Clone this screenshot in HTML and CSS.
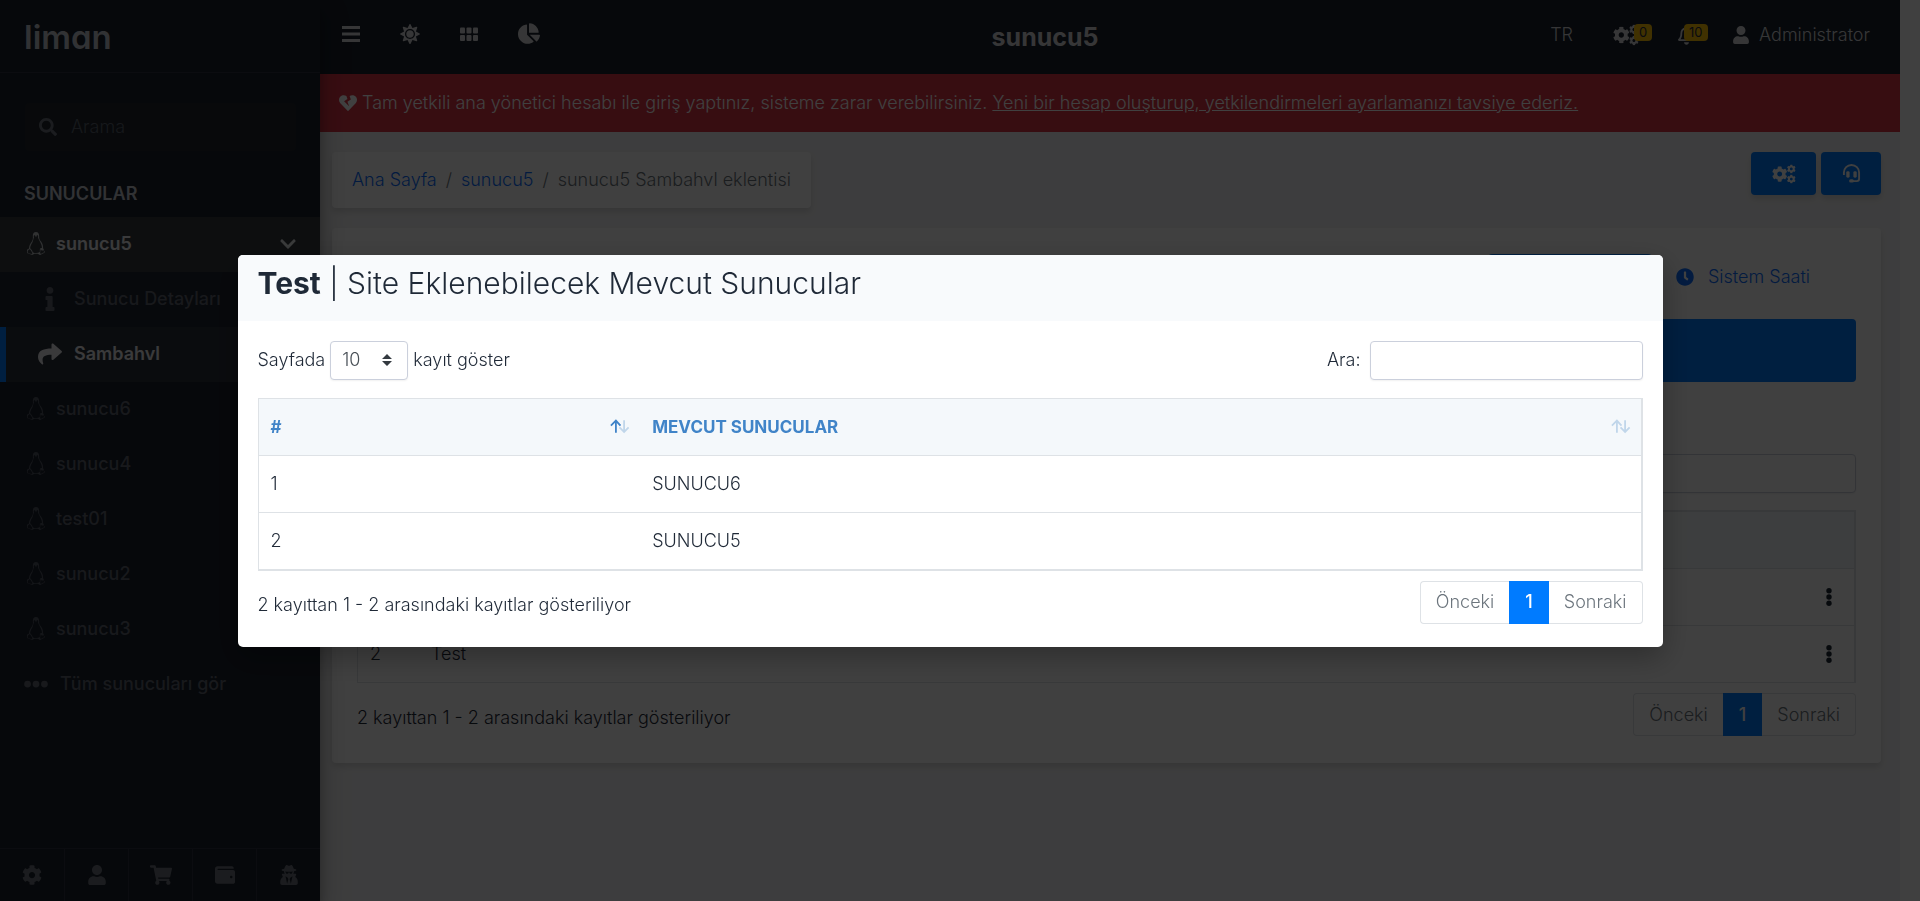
FILE: index.html
```html
<!DOCTYPE html>
<html lang="tr">
<head>
<meta charset="utf-8">
<meta name="viewport" content="width=device-width, initial-scale=1">
<title>sunucu5 - Liman</title>
<link rel="stylesheet" href="styles.css">
</head>
<body>
<svg class="sprite" aria-hidden="true">
  <symbol id="cog" viewBox="0 0 512 512"><path d="M487.4 315.7l-42.6-24.6c4.3-23.2 4.3-47 0-70.2l42.6-24.6c4.9-2.8 7.1-8.6 5.5-14-11.1-35.6-30-67.8-54.7-94.6-3.8-4.1-10-5.1-14.8-2.3L380.8 110c-17.9-15.4-38.5-27.3-60.8-35.1V25.8c0-5.6-3.9-10.5-9.4-11.7-36.7-8.2-74.3-7.8-109.2 0-5.5 1.2-9.4 6.1-9.4 11.7V75c-22.2 7.9-42.8 19.8-60.8 35.1L88.7 85.5c-4.9-2.8-11-1.9-14.8 2.3-24.7 26.7-43.6 58.9-54.7 94.6-1.7 5.4.6 11.2 5.5 14L67.3 221c-4.3 23.2-4.3 47 0 70.2l-42.6 24.6c-4.9 2.8-7.1 8.6-5.5 14 11.1 35.6 30 67.8 54.7 94.6 3.8 4.1 10 5.1 14.8 2.3l42.6-24.6c17.9 15.4 38.5 27.3 60.8 35.1v49.2c0 5.6 3.9 10.5 9.4 11.7 36.7 8.2 74.3 7.8 109.2 0 5.5-1.2 9.4-6.1 9.4-11.7v-49.2c22.2-7.9 42.8-19.8 60.8-35.1l42.6 24.6c4.9 2.8 11 1.9 14.8-2.3 24.7-26.7 43.6-58.9 54.7-94.6 1.5-5.5-.7-11.3-5.6-14.1zM256 336c-44.1 0-80-35.9-80-80s35.9-80 80-80 80 35.9 80 80-35.9 80-80 80z"/></symbol>
  <symbol id="cogs" viewBox="0 0 640 512"><use href="#cog" x="-5" y="46" width="420" height="420"/><use href="#cog" x="395" y="0" width="240" height="240"/><use href="#cog" x="395" y="272" width="240" height="240"/></symbol>
  <symbol id="user" viewBox="0 0 448 512"><path d="M224 256c70.7 0 128-57.3 128-128S294.7 0 224 0 96 57.3 96 128s57.3 128 128 128zm89.6 32h-16.7c-22.2 10.2-46.9 16-72.9 16s-50.6-5.8-72.9-16h-16.7C60.2 288 0 348.2 0 422.4V464c0 26.5 21.5 48 48 48h352c26.5 0 48-21.5 48-48v-41.6c0-74.2-60.2-134.4-134.4-134.4z"/></symbol>
  <symbol id="tux" viewBox="0 0 20 24"><path fill-rule="evenodd" d="M10 0C7.600 0 6.600 1.700 6.700 4.200c.1 2.600.2 3.700-.9 5.500C4.500 11.600 2.800 14 2.700 17.100L.9 18.300c-.6 1 .3 1.700 0 2.900-.2 1.200.7 1.400 2.300 1.700 1.700.4 2.900 1.500 4.200.3.7-.6 4.500-.6 5.300 0 1.300 1.400 2.700.6 3.900-.4 1-.8 2.700-1.100 2.700-2 0-.7-1.200-1-1.200-2.600 0-.7-.4-.9-.8-1.300.5-3-1-5.700-2.700-7.700-1.200-1.500-1.300-2.500-1.300-4.800C13.300 1.700 12.400 0 10 0zM8.600 3.400c.7 0 .9.8.9 1.500h1c0-.8.2-1.500.9-1.500.9 0 1 1.300.7 2.200.5 2.100 1.500 3.400 2.300 5 1 2 1.900 3.800 1.700 6-1.400-.1-2.100.5-2.100 2v2.200c-2 1.500-5.300 1.500-7.400.2C6.300 19.500 4.900 17.500 3.900 16.900c.1-2.300 1.200-4.200 2.300-6 .8-1.500.9-3.300 1.700-5.300-.4-.9-.3-2.200.7-2.200zM3.100 18.100c1.200 0 2 2 2.900 3.500.6 1.100-.3 1.500-1.600 1.200l-2.700-.6c.3-1.200-.4-2 .1-3 .3-.5.9-.5 1.300-1.100zm11.700-.1c.8 1.700 2.100 1.700 3 .8 0 .8.500 1.300.9 2-.7.700-2 .8-2.800 1.600-.7.7-1.600.4-1.600-.8z"/></symbol>
  <symbol id="dots" viewBox="0 0 512 512"><circle cx="76" cy="256" r="72"/><circle cx="256" cy="256" r="72"/><circle cx="436" cy="256" r="72"/></symbol>
  <symbol id="vdots" viewBox="0 0 6 20"><circle cx="3" cy="3" r="3"/><circle cx="3" cy="10" r="3"/><circle cx="3" cy="17" r="3"/></symbol>
  <symbol id="sort" viewBox="0 0 22 16"><path class="up" d="M6.500 15V2M1 7l5.500-5.500L11.500 7"/><path class="down" d="M15.500 1v13M10.500 9l5 5 5-5"/></symbol>
</svg>

<div class="app">
  <aside class="sidebar">
    <a class="brand" href="#">liman</a>
    <div class="search">
      <svg class="icon" viewBox="0 0 512 512" aria-hidden="true"><path d="M505 442.7L405.3 343c-4.500-4.500-10.600-7-17-7H372c27.600-35.300 44-79.700 44-128C416 93.100 322.900 0 208 0S0 93.100 0 208s93.100 208 208 208c48.300 0 92.700-16.400 128-44v16.300c0 6.400 2.500 12.500 7 17l99.700 99.700c9.400 9.400 24.600 9.400 33.900 0l28.300-28.300c9.400-9.400 9.400-24.600.1-34zM208 336c-70.700 0-128-57.200-128-128 0-70.700 57.200-128 128-128 70.700 0 128 57.200 128 128 0 70.700-57.200 128-128 128z"/></svg>
      <input type="search" placeholder="Arama" aria-label="Arama">
    </div>
    <h2 class="nav-title">SUNUCULAR</h2>
    <nav class="nav">
      <a class="nav-item open" href="#"><svg class="tux"><use href="#tux"/></svg><span>sunucu5</span><svg class="chevron" viewBox="0 0 448 512"><path d="M207.029 381.476L12.686 187.132c-9.373-9.373-9.373-24.569 0-33.941l22.667-22.667c9.357-9.357 24.522-9.375 33.901-.04L224 284.505l154.745-154.021c9.379-9.335 24.544-9.317 33.901.04l22.667 22.667c9.373 9.373 9.373 24.569 0 33.941L240.971 381.476c-9.373 9.372-24.569 9.372-33.942 0z"/></svg></a>
      <a class="nav-item sub" href="#"><svg class="sub-icon" viewBox="0 0 192 512"><path d="M20 424.229h20V279.771H20c-11.046 0-20-8.954-20-20V212c0-11.046 8.954-20 20-20h112c11.046 0 20 8.954 20 20v212.229h20c11.046 0 20 8.954 20 20V492c0 11.046-8.954 20-20 20H20c-11.046 0-20-8.954-20-20v-47.771c0-11.046 8.954-20 20-20zM96 0C56.235 0 24 32.235 24 72s32.235 72 72 72 72-32.235 72-72S135.764 0 96 0z"/></svg><span>Sunucu Detayları</span></a>
      <a class="nav-item sub current" href="#"><svg class="sub-icon" viewBox="0 0 512 512"><path d="M503.691 189.836L327.687 37.851C312.281 24.546 288 35.347 288 56.015v80.053C127.371 137.907 0 170.100 0 322.326c0 61.441 39.581 122.309 83.333 154.132 13.653 9.931 33.111-2.533 28.077-18.631C66.066 312.814 132.917 274.316 288 272.085V360c0 20.700 24.300 31.453 39.687 18.164l176.004-152c11.071-9.562 11.086-26.753 0-36.328z"/></svg><span>Sambahvl</span></a>
      <a class="nav-item" href="#"><svg class="tux"><use href="#tux"/></svg><span>sunucu6</span></a>
      <a class="nav-item" href="#"><svg class="tux"><use href="#tux"/></svg><span>sunucu4</span></a>
      <a class="nav-item" href="#"><svg class="tux"><use href="#tux"/></svg><span>test01</span></a>
      <a class="nav-item" href="#"><svg class="tux"><use href="#tux"/></svg><span>sunucu2</span></a>
      <a class="nav-item" href="#"><svg class="tux"><use href="#tux"/></svg><span>sunucu3</span></a>
      <a class="nav-item all" href="#"><svg class="dots"><use href="#dots"/></svg><span>Tüm sunucuları gör</span></a>
    </nav>
    <div class="sidebar-footer">
      <a href="#" aria-label="Ayarlar"><svg class="icon"><use href="#cog"/></svg></a>
      <a href="#" aria-label="Profil"><svg class="icon"><use href="#user"/></svg></a>
      <a href="#" aria-label="Market"><svg class="icon wide" viewBox="0 0 576 512"><path d="M528.120 301.319l47.273-208C578.806 78.301 567.391 64 551.990 64H159.208l-9.166-44.810C147.758 8.021 137.930 0 126.529 0H24C10.745 0 0 10.745 0 24v16c0 13.255 10.745 24 24 24h69.883l70.248 343.435C147.325 417.100 136 435.222 136 456c0 30.928 25.072 56 56 56s56-25.072 56-56c0-15.674-6.447-29.835-16.824-40h209.647C430.447 426.165 424 440.326 424 456c0 30.928 25.072 56 56 56s56-25.072 56-56c0-22.172-12.888-41.332-31.579-50.405l5.517-24.276c3.413-15.018-8.002-29.319-23.403-29.319H218.117l-6.545-32h293.145c11.206 0 20.920-7.754 23.403-18.681z"/></svg></a>
      <a href="#" aria-label="Kasa"><svg class="icon" viewBox="0 0 512 512"><path d="M461.200 128H80c-8.840 0-16-7.160-16-16s7.160-16 16-16h384c8.840 0 16-7.160 16-16 0-26.510-21.490-48-48-48H64C28.650 32 0 60.650 0 96v320c0 35.350 28.650 64 64 64h397.200c28.020 0 50.800-21.530 50.800-48V176c0-26.470-22.780-48-50.800-48zM416 336c-17.670 0-32-14.330-32-32s14.330-32 32-32 32 14.330 32 32-14.330 32-32 32z"/></svg></a>
      <a href="#" aria-label="Erişim"><svg class="icon" viewBox="0 0 448 512"><path d="M383.900 308.300l23.900-62.600c4-10.500-3.700-21.700-15-21.700h-58.500c11-18.900 17.800-40.600 17.800-64v-.3c39.200-7.800 64-19.100 64-31.700 0-13.300-27.300-25.100-70.100-33-9.200-32.800-27-65.800-40.600-82.800-9.500-11.900-25.900-15.600-39.500-8.800l-27.600 13.800c-9 4.500-19.600 4.500-28.600 0L182.100 3.400c-13.600-6.800-30-3.100-39.500 8.800-13.500 17-31.400 50-40.600 82.800-42.700 7.900-70 19.700-70 33 0 12.600 24.800 23.900 64 31.700v.3c0 23.400 6.800 45.100 17.800 64H56.300c-11.500 0-19.200 11.700-14.700 22.300l25.800 60.200C27.300 329.800 0 372.700 0 422.400v44.800C0 491.900 20.100 512 44.800 512h358.400c24.700 0 44.800-20.100 44.800-44.800v-44.800c0-48.400-25.800-90.400-64.100-114.100zM176 480l-41.600-192 49.600 32 24 40-32 120zm96 0l-32-120 24-40 49.600-32L272 480zm41.700-298.500c-3.900 11.900-7 24.600-16.500 33.400-10.100 9.300-48 22.400-64-25-2.800-8.400-15.400-8.400-18.300 0-17 50.200-56 32.400-64 25-9.500-8.800-12.700-21.500-16.500-33.400-.8-2.500-6.300-5.700-6.300-5.800v-10.800c28.300 3.600 61 5.800 96 5.800s67.700-2.100 96-5.800v10.800c-.1.100-5.600 3.200-6.400 5.800z"/></svg></a>
    </div>
  </aside>

  <div class="main">
    <header class="topbar">
      <div class="tools">
        <button type="button" aria-label="Menü"><svg viewBox="0 0 18 18"><path d="M0 1h18v3H0zM0 7.500h18v3H0zM0 14h18v3H0z"/></svg></button>
        <button type="button" aria-label="Tema"><svg class="sun" viewBox="0 0 512 512"><path d="M256 160c-52.900 0-96 43.100-96 96s43.100 96 96 96 96-43.100 96-96-43.100-96-96-96zm246.400 80.500l-94.700-47.300 33.500-100.400c4.500-13.600-8.400-26.500-21.900-21.900l-100.400 33.500-47.400-94.800c-6.400-12.800-24.600-12.800-31 0l-47.300 94.700L92.700 70.800c-13.600-4.500-26.500 8.400-21.900 21.900l33.500 100.400-94.700 47.400c-12.800 6.400-12.800 24.600 0 31l94.700 47.300-33.500 100.500c-4.500 13.600 8.400 26.500 21.900 21.900l100.400-33.500 47.300 94.700c6.400 12.800 24.600 12.800 31 0l47.300-94.700 100.400 33.500c13.600 4.500 26.500-8.400 21.900-21.900l-33.500-100.400 94.700-47.300c13-6.500 13-24.700.2-31.100zm-155.900 106c-49.900 49.900-131.100 49.900-181 0-49.900-49.900-49.900-131.100 0-181 49.900-49.900 131.100-49.900 181 0 49.900 49.900 49.900 131.100 0 181z"/></svg></button>
        <button type="button" aria-label="Eklentiler"><svg viewBox="0 0 18 18"><rect y="2.500" width="5" height="6" rx="1"/><rect x="6.500" y="2.500" width="5" height="6" rx="1"/><rect x="13" y="2.500" width="5" height="6" rx="1"/><rect y="10" width="5" height="6" rx="1"/><rect x="6.500" y="10" width="5" height="6" rx="1"/><rect x="13" y="10" width="5" height="6" rx="1"/></svg></button>
        <button type="button" aria-label="Panel"><svg class="pie" viewBox="0 0 544 512"><path d="M527.790 288H290.500l158.030 158.030c6.040 6.040 15.980 6.530 22.190.68 38.700-36.460 65.320-85.610 73.130-140.860 1.340-9.460-6.510-17.850-16.060-17.850zm-15.830-64.800C503.720 103.740 408.260 8.280 288.800.04 279.680-.59 272 7.100 272 16.240V240h223.770c9.140 0 16.820-7.680 16.190-16.800zM224 288V50.710c0-9.550-8.390-17.400-17.840-16.060C86.990 51.490-4.100 155.600.14 280.370 4.500 408.510 114.830 513.590 243.030 511.980c50.400-.63 96.970-16.870 135.260-44.030 7.900-5.600 8.420-17.230 1.570-24.080L224 288z"/></svg></button>
      </div>
      <h1 class="page-title">sunucu5</h1>
      <div class="account">
        <a href="#">TR</a>
        <a class="counter gears" href="#" aria-label="Görevler"><svg class="cogs"><use href="#cogs"/></svg><span class="badge">0</span></a>
        <a class="counter alarms" href="#" aria-label="Bildirimler"><svg class="bell" viewBox="0 0 448 512"><path d="M439.390 362.290c-19.320-20.760-55.470-51.990-55.470-154.290 0-77.700-54.480-139.900-127.940-155.160V32c0-17.670-14.320-32-31.980-32s-31.980 14.330-31.980 32v20.840C118.560 68.100 64.080 130.300 64.080 208c0 102.300-36.150 133.530-55.470 154.290-6 6.450-8.660 14.160-8.610 21.710.11 16.400 12.980 32 32.100 32h383.800c19.120 0 32-15.600 32.100-32 .05-7.550-2.610-15.270-8.610-21.710zM67.530 368c21.220-27.970 44.420-74.330 44.530-159.420 0-.2-.06-.38-.06-.58 0-61.860 50.140-112 112-112s112 50.140 112 112c0 .2-.06.38-.06.58.11 85.100 23.310 131.460 44.530 159.420H67.530zM224 512c35.320 0 63.970-28.650 63.970-64H160.030c0 35.350 28.650 64 63.970 64z"/></svg><span class="badge">10</span></a>
        <a class="profile" href="#"><svg class="person"><use href="#user"/></svg>Administrator</a>
      </div>
    </header>

    <div class="alert">
      <svg class="icon" viewBox="0 0 512 512" aria-hidden="true"><path d="M473.700 73.800l-2.400-2.500c-46-47-118-51.700-169.600-14.800L336 159.900l-96 64 48 128-144-144 96-64-28.600-86.500C159.700 19.600 87 24 40.700 71.400l-2.400 2.400C-10.400 123.600-12.500 202.900 31 256l212.100 218.600c7.100 7.300 18.600 7.300 25.700 0L481 255.900c43.500-53 41.400-132.300-7.300-182.100z"/></svg>
      <span>Tam yetkili ana yönetici hesabı ile giriş yaptınız, sisteme zarar verebilirsiniz. <a href="#">Yeni bir hesap oluşturup, yetkilendirmeleri ayarlamanızı tavsiye ederiz.</a></span>
    </div>

    <main class="content">
      <div class="heading-row">
        <nav class="breadcrumb" aria-label="Konum">
          <a href="#">Ana Sayfa</a><span class="slash">/</span><a href="#">sunucu5</a><span class="slash">/</span><span>sunucu5 Sambahvl eklentisi</span>
        </nav>
        <div class="actions">
          <button class="btn gear-btn" type="button" aria-label="Eklenti ayarları"><svg class="cogs"><use href="#cogs"/></svg></button>
          <button class="btn help-btn" type="button" aria-label="Destek"><svg class="headset" viewBox="0 0 20 20"><path class="line" d="M2 11.500V9a8 8 0 0 1 16 0v6.500a2.500 2.500 0 0 1-2.500 2.500H10"/><rect x="4.500" y="7.500" width="3.500" height="7" rx="1.500"/><rect x="12" y="7.500" width="3.500" height="7" rx="1.500"/><rect x="7.500" y="16" width="5" height="3.500" rx="1.700"/></svg></button>
        </div>
      </div>

      <section class="card">
        <div class="tabs">
          <button class="tab selected" type="button" aria-label="Siteler"></button>
          <button class="tab" type="button"><svg class="icon" viewBox="0 0 512 512"><path d="M256,8C119,8,8,119,8,256S119,504,256,504,504,393,504,256,393,8,256,8Zm92.490,313h0l-20,25a16,16,0,0,1-22.490,2.500h0l-67-49.720a40,40,0,0,1-15-31.230V112a16,16,0,0,1,16-16h32a16,16,0,0,1,16,16V256l58,42.500A16,16,0,0,1,348.490,321Z"/></svg>Sistem Saati</button>
        </div>
        <div class="banner"></div>
        <div class="card-search"><input class="field" type="search" aria-label="Ara"></div>
        <table class="table sites">
          <thead><tr><th></th><th></th><th></th></tr></thead>
          <tbody>
            <tr><td></td><td></td><td class="menu"><button type="button" aria-label="İşlemler"><svg><use href="#vdots"/></svg></button></td></tr>
            <tr><td>2</td><td>Test</td><td class="menu"><button type="button" aria-label="İşlemler"><svg><use href="#vdots"/></svg></button></td></tr>
          </tbody>
        </table>
        <div class="table-footer">
          <p>2 kayıttan 1 - 2 arasındaki kayıtlar gösteriliyor</p>
          <div class="pager"><button type="button">Önceki</button><button class="on" type="button">1</button><button type="button">Sonraki</button></div>
        </div>
      </section>
    </main>
  </div>
</div>

<div class="backdrop">
  <div class="modal" role="dialog" aria-modal="true" aria-labelledby="modal-title">
    <div class="modal-header"><h2 id="modal-title"><b>Test</b> | Site Eklenebilecek Mevcut Sunucular</h2></div>
    <div class="modal-body">
      <div class="controls">
        <label class="length" for="length"><span>Sayfada</span>
          <span class="select"><select id="length"><option>10</option><option>25</option></select><svg viewBox="0 0 10 12" aria-hidden="true"><path d="M0 5l5-5 5 5zM0 7h10l-5 5z"/></svg></span>
          <span>kayıt göster</span></label>
        <label class="filter" for="filter"><span>Ara:</span><input class="field" id="filter" type="search"></label>
      </div>
      <table class="table servers">
        <thead><tr>
          <th><div>#<svg class="sort asc"><use href="#sort"/></svg></div></th>
          <th><div>MEVCUT SUNUCULAR<svg class="sort"><use href="#sort"/></svg></div></th>
        </tr></thead>
        <tbody><tr><td>1</td><td>SUNUCU6</td></tr><tr><td>2</td><td>SUNUCU5</td></tr></tbody>
      </table>
      <div class="table-footer">
        <p>2 kayıttan 1 - 2 arasındaki kayıtlar gösteriliyor</p>
        <div class="pager"><button type="button">Önceki</button><button class="on" type="button">1</button><button type="button">Sonraki</button></div>
      </div>
    </div>
  </div>
</div>
</body>
</html>
```

FILE: styles.css
```css
* { box-sizing: border-box; }

body {
  margin: 0;
  background: #fff;
  color: #1f2937;
  font: 300 18px/24px Inter, "Noto Sans", sans-serif;
}

a { color: inherit; text-decoration: none; }
button, input, select { font: inherit; color: inherit; }
button { margin: 0; padding: 0; border: 0; background: none; }
h1, h2, p { margin: 0; }
svg { display: block; flex: none; fill: currentColor; }
.sprite { position: absolute; width: 0; height: 0; }
.icon { width: 18px; height: 18px; }

.app {
  display: grid;
  grid-template-columns: 320px minmax(0, 1fr);
  min-height: 100vh;
  padding-right: 20px;
}

/* Sidebar */
.sidebar {
  display: flex;
  flex-direction: column;
  position: relative;
  z-index: 2;
  background: #1a202c;
  color: #c2c7d0;
  box-shadow: 0 14px 28px rgba(0, 0, 0, .25), 0 10px 10px rgba(0, 0, 0, .22);
}
.brand {
  height: 73px;
  padding: 13px 24px 11px;
  border-bottom: 1px solid #2d3340;
  font-size: 33px;
  font-weight: 600;
  line-height: 48px;
  font-feature-settings: "cv11" 1;
}
.search {
  display: flex;
  align-items: center;
  gap: 14px;
  height: 48px;
  margin: 30px 24px 0 25px;
  padding: 0 14px;
  border-radius: 4px;
  background: #20262f;
  color: #6c727c;
}
.search input {
  width: 100%;
  min-width: 0;
  padding: 0;
  border: 0;
  outline: 0;
  background: none;
}
.search input::placeholder { color: #5a616c; opacity: 1; }
.nav-title {
  padding: 31px 24px 11px;
  font-size: 18px;
  font-weight: 600;
  line-height: 24px;
}
.nav-item {
  display: flex;
  align-items: center;
  gap: 10px;
  height: 55px;
  padding: 0 24px 2px 26px;
  color: #5f6571;
  font-weight: 500;
}
.tux { width: 20px; height: 23px; opacity: .8; }
.dots { width: 24px; height: 24px; }
.nav-item.all { gap: 12px; padding-left: 24px; }
.nav-item.open { background: #353a3f; color: #e6e8ea; font-weight: 600; }
.chevron { width: 16px; height: 18px; margin-left: auto; }
.nav-item.sub { gap: 12px; padding-left: 38px; background: #1e2430; }
.sub-icon { width: 24px; height: 24px; }
.nav-item.current {
  padding-left: 32px;
  border-left: 6px solid #007bff;
  background: #2b303a;
  color: #e6e8ea;
  font-weight: 600;
}
.sidebar-footer {
  display: grid;
  grid-template-columns: repeat(5, 1fr);
  height: 53px;
  margin-top: auto;
  border-top: 1px solid #2d3340;
  color: #6c727c;
}
.sidebar-footer a { display: grid; place-items: center; }
.sidebar-footer a + a { border-left: 1px solid #2d3340; }
.sidebar-footer .icon { width: 20px; height: 20px; }
.sidebar-footer .wide { width: 22px; }

/* Top bar */
.main { min-width: 0; background: #f4f4f5; }
.topbar {
  display: flex;
  justify-content: space-between;
  align-items: center;
  height: 74px;
  padding: 0 30px 0 22px;
  background: #1a202c;
  color: #d6d8db;
}
.tools { display: flex; align-items: center; gap: 40px; padding-bottom: 7px; }
.tools svg { width: 18px; height: 18px; }
.tools .sun { width: 20px; height: 20px; }
.tools .pie { width: 22px; height: 21px; }
.page-title { font-size: 25px; font-weight: 700; line-height: 36px; }
.account { display: flex; align-items: center; padding-bottom: 5px; }
.counter { position: relative; }
.gears { margin-left: 40px; }
.alarms { margin-left: 39px; }
.cogs { width: 26px; height: 22px; }
.bell { width: 17px; height: 20px; }
.badge {
  position: absolute;
  top: 0;
  left: 21px;
  padding: 0 5px;
  border-radius: 4px;
  background: #ffc107;
  color: #1f2d3d;
  font-size: 13px;
  font-weight: 400;
  line-height: 17px;
}
.alarms .badge { top: -1px; left: 6px; }
.profile { display: flex; align-items: center; gap: 10px; margin-left: 38px; }
.person { width: 16px; height: 18px; }

.alert {
  display: flex;
  align-items: center;
  gap: 5px;
  height: 58px;
  padding: 0 19px;
  background: #dc3545;
  color: #fff;
}
.alert a { text-decoration: underline; }

/* Page content */
.content { padding: 20px 19px 20px 12px; }
.heading-row { display: flex; justify-content: space-between; align-items: flex-start; margin-bottom: 20px; }
.breadcrumb {
  display: flex;
  gap: 9px;
  padding: 16px 20px;
  border-radius: 4px;
  background: #fff;
  box-shadow: 0 4px 6px rgba(0, 0, 0, .12);
  color: #6c757d;
}
.breadcrumb a { color: #0d6efd; }
.actions { display: flex; gap: 5px; }
.btn {
  display: grid;
  place-items: center;
  width: 65px;
  height: 43px;
  border-radius: 4px;
  background: #007bff;
  box-shadow: 0 4px 6px rgba(0, 0, 0, .12);
  color: #fff;
}
.btn .cogs { width: 24px; height: 20px; }
.help-btn { width: 60px; }
.headset { width: 19px; height: 19px; }
.headset .line { fill: none; stroke: currentColor; stroke-width: 2; }
.card {
  padding: 26px 25px 27px;
  border-radius: 4px;
  background: #fff;
  box-shadow: 0 4px 6px rgba(0, 0, 0, .12);
}
.tabs { display: flex; justify-content: flex-end; margin-right: 22px; }
.tab {
  display: flex;
  align-items: center;
  gap: 14px;
  height: 46px;
  padding: 0 24px;
  border-radius: 4px;
  color: #0d6efd;
}
.tab.selected { width: 164px; background: #007bff; }
.banner { height: 63px; margin: 19px 0 72px; border-radius: 4px; background: #007bff; }
.card-search { display: flex; justify-content: flex-end; margin-bottom: 17px; }
.field {
  width: 273px;
  height: 39px;
  padding: 0 12px;
  border: 1px solid #cbd0dc;
  border-radius: 4px;
  outline: 0;
  background: #fff;
  box-shadow: 0 1px 2px rgba(0, 0, 0, .06);
}

/* Tables */
.table {
  width: 100%;
  border: 1px solid #dee2e6;
  border-spacing: 0;
  text-align: left;
}
.table th, .table td { height: 57px; padding: 0 12px; border-bottom: 1px solid #dee2e6; }
.table th {
  padding-right: 10px;
  background: #f4f8fb;
  color: #4084c8;
  font-size: 17px;
  font-weight: 700;
}
.table tr > :last-child { border-right: 1px solid #dee2e6; }
.servers th:first-child { width: 27.600%; }
.servers th div { display: flex; justify-content: space-between; align-items: center; }
.sort { width: 20px; height: 15px; fill: none; stroke: #c0d6ea; stroke-width: 2; }
.asc { --up: #4084c8; }
.up { stroke: var(--up, #c0d6ea); }
.sites { border-bottom: 0; }
.sites th { height: 58px; border-top: 1px solid #dee2e6; }
.sites th:first-child { width: 61px; }
.menu button { display: block; margin-left: auto; padding: 0 10px; }
.menu svg { width: 6px; height: 18px; }
.table-footer {
  display: flex;
  justify-content: space-between;
  align-items: center;
  margin-top: 10px;
}
.table-footer p { padding-top: 6px; }
.pager { display: flex; }
.pager button {
  height: 43px;
  padding: 0 15px;
  border: 1px solid #dee2e6;
  background: #fff;
  color: #6c757d;
}
.pager button:first-child { border-right: 0; border-radius: 4px 0 0 4px; }
.pager button:last-child { border-left: 0; border-radius: 0 4px 4px 0; }
.pager .on { border-color: #007bff; background: #007bff; color: #fff; font-weight: 500; }

/* Dialog */
.backdrop {
  display: flex;
  justify-content: center;
  align-items: center;
  position: fixed;
  inset: 0;
  z-index: 10;
  padding-right: 20px;
  background: rgba(0, 0, 0, .75);
}
.modal {
  width: 75%;
  overflow: hidden;
  border-radius: 5px;
  background: #fff;
  box-shadow: 0 10px 30px rgba(0, 0, 0, .3);
}
.modal-header { padding: 6px 20px 15px; background: #f8fafc; }
.modal-header h2 { font-size: 30px; font-weight: 300; line-height: 45px; }
.modal-header b { font-weight: 700; }
.modal-body { padding: 20px 20px 23px; }
.controls { display: flex; justify-content: space-between; margin-bottom: 18px; }
.length, .filter { display: flex; align-items: center; }
.length { gap: 5px; }
.filter { gap: 9px; }
.select { display: grid; align-items: center; }
.select select {
  grid-area: 1 / 1;
  width: 78px;
  height: 39px;
  padding: 0 11px;
  border: 1px solid #cbd0dc;
  border-radius: 4px;
  appearance: none;
  background: #fff;
  box-shadow: 0 1px 2px rgba(0, 0, 0, .06);
  color: #495057;
}
.select svg {
  grid-area: 1 / 1;
  justify-self: end;
  width: 10px;
  height: 12px;
  margin-right: 16px;
  color: #343a40;
  pointer-events: none;
}
```
